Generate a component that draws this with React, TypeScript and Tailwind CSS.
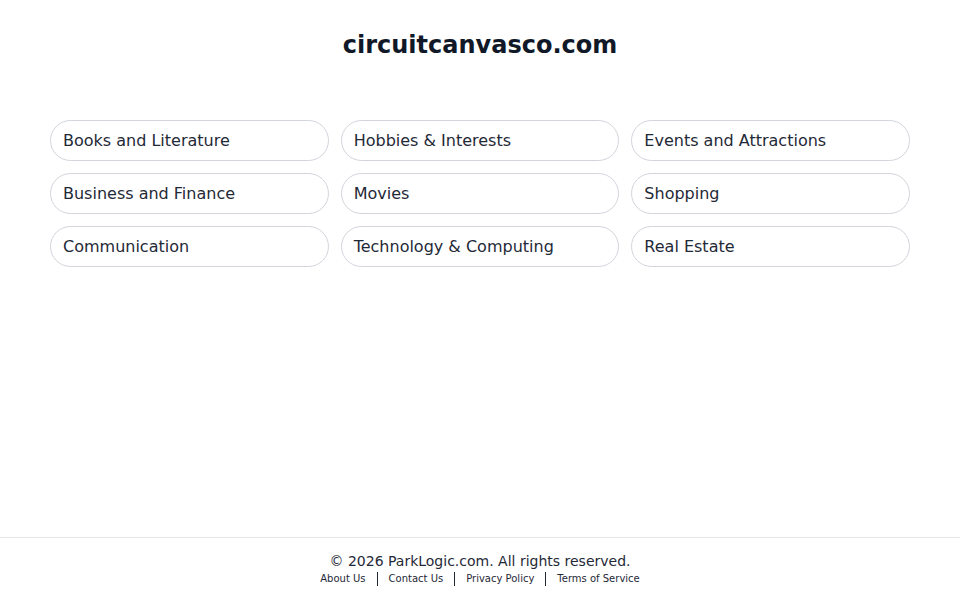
import React from "react";

const items = [
  "Books and Literature",
  "Hobbies & Interests",
  "Events and Attractions",
  "Business and Finance",
  "Movies",
  "Shopping",
  "Communication",
  "Technology & Computing",
  "Real Estate",
];

export default function App() {
  const links = ["About Us", "Contact Us", "Privacy Policy", "Terms of Service"];
  return (
    <div
      className="min-h-screen flex flex-col bg-white"
      style={{ fontFamily: '"DejaVu Sans", sans-serif' }}
    >
      <main className="flex-1">
        <h1 className="pt-[29px] text-center text-[24px] leading-[32px] font-bold text-[#111827]">
          circuitcanvasco.com
        </h1>
        <div className="mx-[50px] mt-[59px] grid grid-cols-3 gap-[12px]">
          {items.map((t) => (
            <div
              key={t}
              className="h-[41px] flex items-center px-[12px] rounded-full border border-[#d1d5db] text-[16px] text-[#1f2937]"
            >
              {t}
            </div>
          ))}
        </div>
      </main>
      <footer className="border-t border-[#e5e7eb] pt-[13px] pb-[14px] text-center">
        <div className="text-[14px] leading-[20px] text-[#1f2937]">
          © 2026 ParkLogic.com. All rights reserved.
        </div>
        <div className="mt-px flex justify-center items-center text-[10px] leading-[14px] text-[#1f2937]">
          {links.map((l, i) => (
            <React.Fragment key={l}>
              {i > 0 && <span className="mx-[11px] w-px h-[14px] bg-[#1f2937]" />}
              <a href="#">{l}</a>
            </React.Fragment>
          ))}
        </div>
      </footer>
    </div>
  );
}
